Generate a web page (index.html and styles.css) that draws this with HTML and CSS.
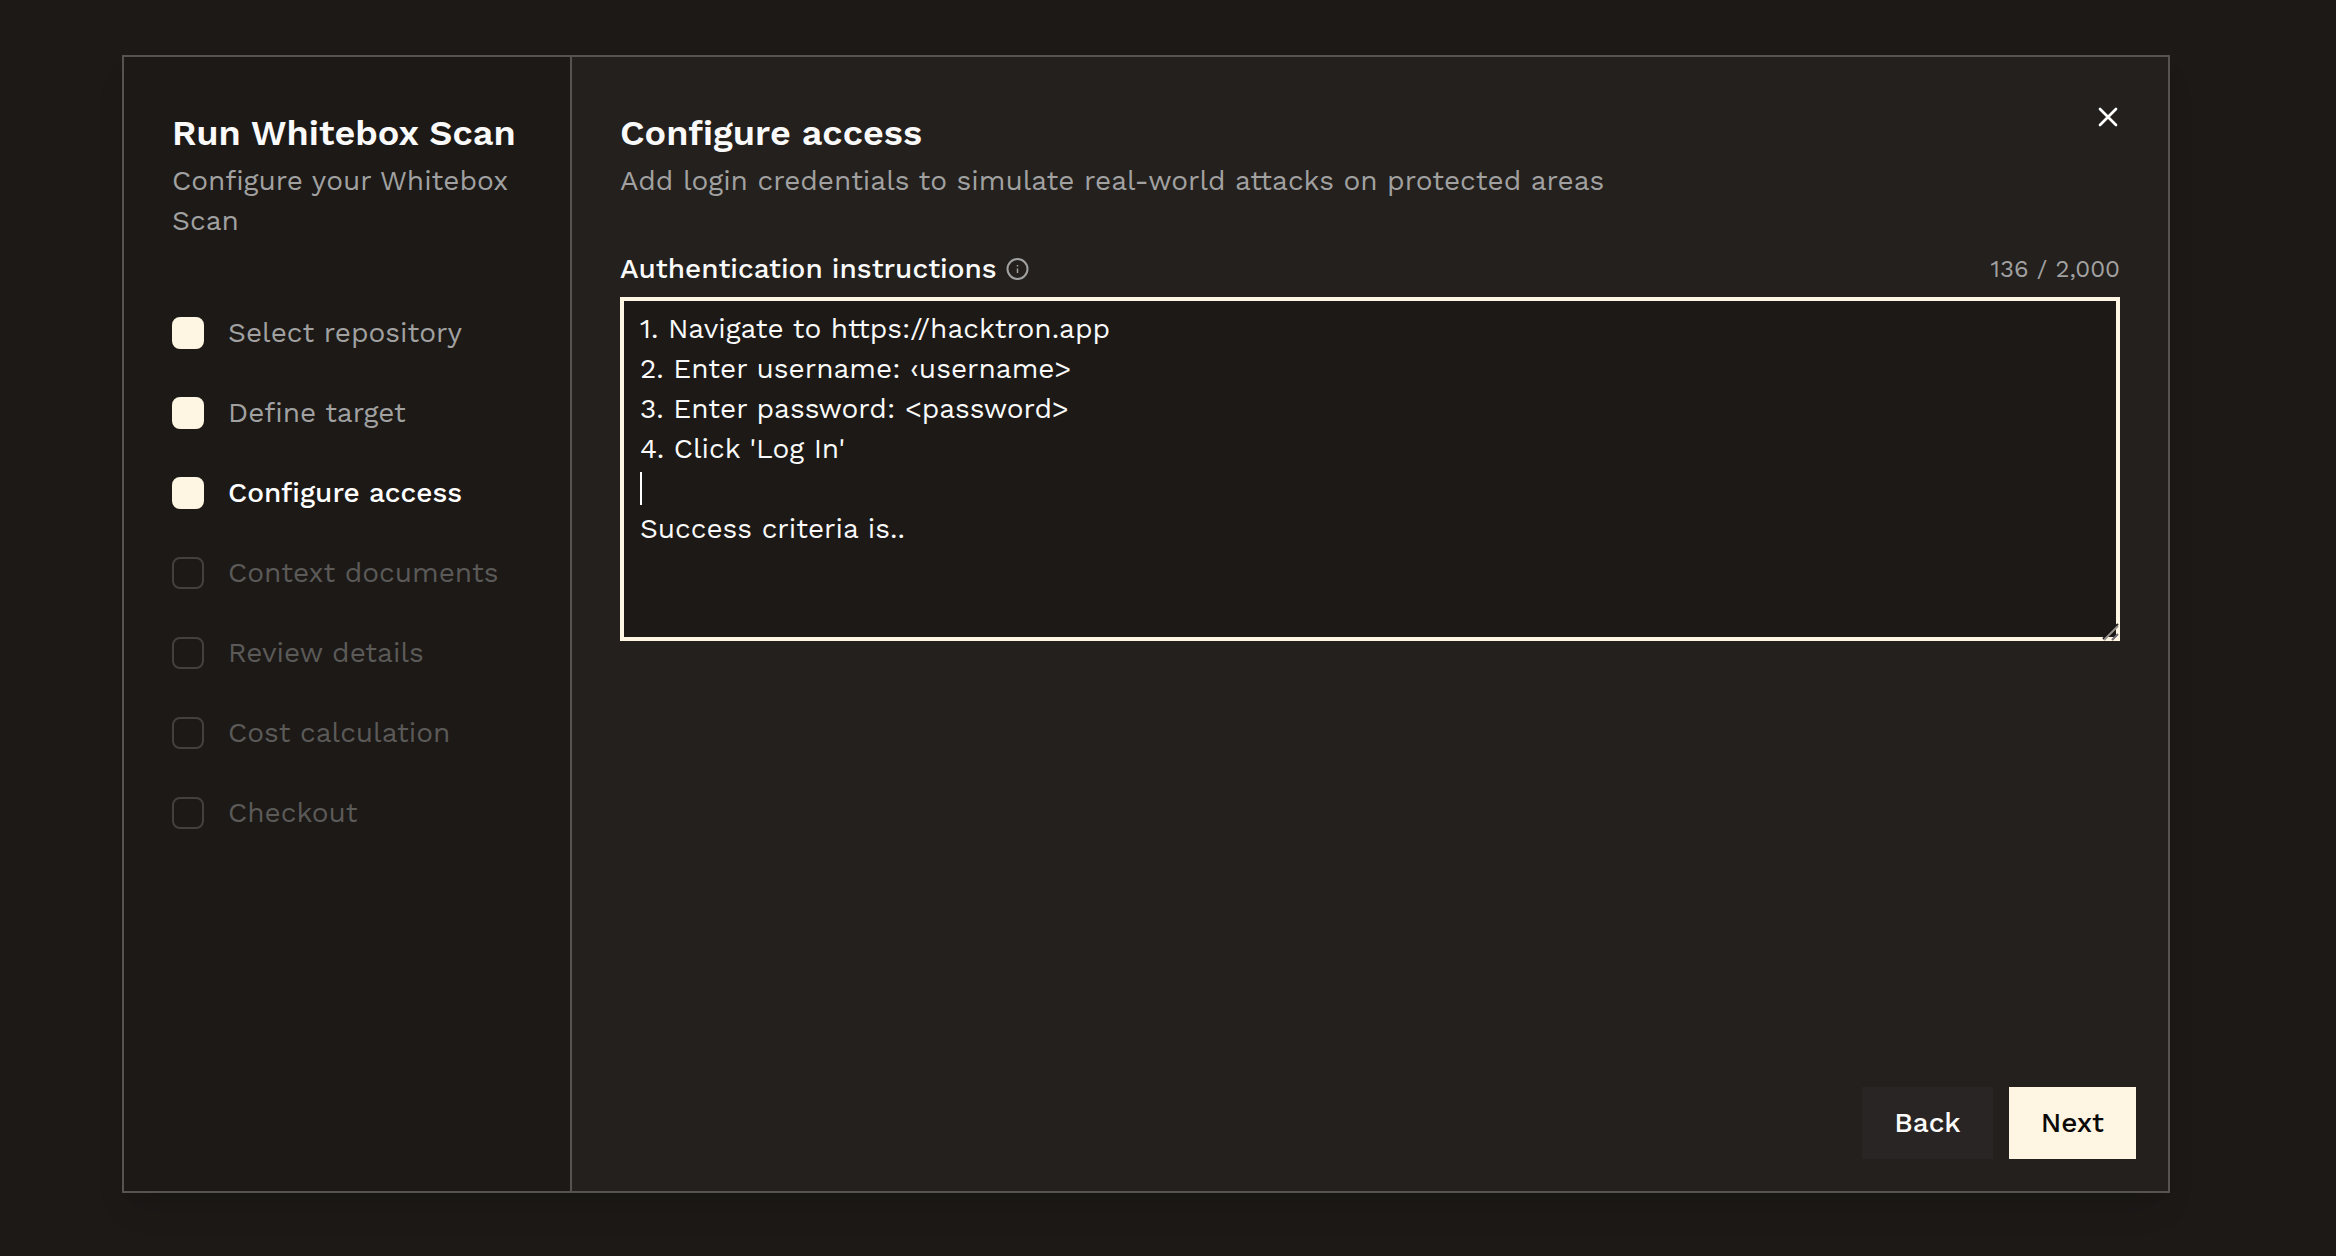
FILE: index.html
```html
<!DOCTYPE html>
<html lang="en">
<head>
  <meta charset="UTF-8">
  <meta name="viewport" content="width=device-width, initial-scale=1.0">
  <title>Run Whitebox Scan</title>
  <link rel="stylesheet" href="styles.css">
</head>
<body>

  <div class="modal" role="dialog" aria-labelledby="modal-title">
    <aside class="sidebar">
      <h1 class="title" id="modal-title">Run Whitebox Scan</h1>
      <p class="subtitle">Configure your Whitebox Scan</p>

      <ol class="steps">
        <li class="step"><input type="checkbox" id="step-repo" checked><label for="step-repo">Select repository</label></li>
        <li class="step"><input type="checkbox" id="step-target" checked><label for="step-target">Define target</label></li>
        <li class="step current"><input type="checkbox" id="step-access" checked><label for="step-access">Configure access</label></li>
        <li class="step pending"><input type="checkbox" id="step-docs" disabled><label for="step-docs">Context documents</label></li>
        <li class="step pending"><input type="checkbox" id="step-review" disabled><label for="step-review">Review details</label></li>
        <li class="step pending"><input type="checkbox" id="step-cost" disabled><label for="step-cost">Cost calculation</label></li>
        <li class="step pending"><input type="checkbox" id="step-checkout" disabled><label for="step-checkout">Checkout</label></li>
      </ol>
    </aside>

    <main class="content">
      <button class="close" type="button" aria-label="Close">
        <svg viewBox="0 0 24 24" fill="none" stroke="currentColor" stroke-width="2" stroke-linecap="round"><path d="M18 6 6 18M6 6l12 12"/></svg>
      </button>

      <h2 class="title">Configure access</h2>
      <p class="subtitle">Add login credentials to simulate real-world attacks on protected areas</p>

      <div class="field-head">
        <label for="instructions">Authentication instructions</label>
        <svg class="info" viewBox="0 0 24 24" fill="none" stroke="currentColor">
          <circle cx="12.5" cy="12" r="10" stroke-width="2"/>
          <path d="M12.5 11.5V16M12.5 8v1.5" stroke-width="1.5"/>
        </svg>
        <span class="counter">136 / 2,000</span>
      </div>

      <div class="editor">
        <textarea id="instructions" maxlength="2000" spellcheck="false">1. Navigate to https://hacktron.app
2. Enter username: ‹username&gt;
3. Enter password: &lt;password&gt;
4. Click 'Log In'

Success criteria is..</textarea>
        <span class="caret"></span>
        <svg class="grip" viewBox="0 0 18 18" fill="none">
          <path d="M1 16 16 1" stroke="#1c1917" stroke-width="2"/>
          <path d="M2 17 16 3" stroke="#96938c" stroke-width="2"/>
          <path d="M8 14l6-6v3l-3 3z" fill="#1c1917"/>
          <path d="M10 17l6-6" stroke="#6d6a72" stroke-width="2"/>
        </svg>
      </div>

      <div class="actions">
        <button class="btn back" type="button">Back</button>
        <button class="btn next" type="button">Next</button>
      </div>
    </main>
  </div>

</body>
</html>
```
FILE: styles.css
```css
* {
  box-sizing: border-box;
}

body {
  display: flex;
  min-height: 100vh;
  margin: 0;
  padding: 55px 166px 63px 122px;
  background: #1c1917;
  color: #fafafa;
  font-family: 'Work Sans', Inter, sans-serif;
  font-size: 28px;
  line-height: 40px;
}

.modal {
  display: flex;
  flex: 1;
  border: 2px solid #57534e;
  background: #23201d;
  box-shadow: 0 20px 30px -6px rgba(0, 0, 0, 0.1), 0 8px 12px -8px rgba(0, 0, 0, 0.1);
}

.sidebar {
  flex: 0 0 448px;
  padding: 48px;
  border-right: 2px solid #57534e;
  background: #1c1917;
}

.content {
  position: relative;
  display: flex;
  flex: 1;
  flex-direction: column;
  padding: 48px;
  padding-bottom: 32px;
}

.title {
  margin: 0;
  font-size: 36px;
  font-weight: 600;
  line-height: 56px;
  white-space: nowrap;
}

.subtitle {
  margin: 0;
  color: #a1a1a1;
}

.steps {
  display: flex;
  flex-direction: column;
  gap: 40px;
  margin: 72px 0 0;
  padding: 0;
  list-style: none;
}

.step {
  display: flex;
  align-items: center;
  gap: 24px;
  color: #a1a1a1;
  white-space: nowrap;
}

.step input {
  flex: none;
  appearance: none;
  width: 32px;
  height: 32px;
  margin: 0;
  border: 2px solid #44403c;
  border-radius: 8px;
}

.step input:checked {
  border-color: #fef5e3;
  background: #fef5e3;
}

.current {
  color: #fff;
  font-weight: 500;
}

.pending {
  color: #5b5a58;
}

.close {
  position: absolute;
  top: 44px;
  right: 44px;
  width: 32px;
  height: 32px;
  padding: 0;
  border: none;
  background: none;
  color: #fff;
  cursor: pointer;
}

.close svg {
  display: block;
}

.field-head {
  display: flex;
  align-items: center;
  gap: 8px;
  margin: 48px 0 8px;
  font-weight: 500;
}

.info {
  width: 24px;
  height: 24px;
  color: #a1a1a1;
}

.counter {
  margin-left: auto;
  color: #a1a1a1;
  font-size: 24px;
  font-weight: 400;
}

.editor {
  position: relative;
}

textarea {
  display: block;
  width: 100%;
  height: 344px;
  padding: 8px 16px;
  border: 4px solid #fef5e3;
  border-radius: 0;
  outline: none;
  background: #1c1917;
  color: #fafafa;
  font: inherit;
  resize: none;
}

.caret {
  position: absolute;
  top: 175px;
  left: 20px;
  width: 2px;
  height: 33px;
  background: #fff;
}

.grip {
  position: absolute;
  right: 0;
  bottom: 0;
  width: 18px;
  height: 18px;
}

.actions {
  display: flex;
  justify-content: flex-end;
  gap: 16px;
  margin: auto -16px 0 0;
}

.btn {
  padding: 16px 32px;
  border: none;
  font: inherit;
  font-weight: 500;
  cursor: pointer;
}

.back {
  background: #292524;
  color: #fafafa;
}

.next {
  background: #fef5e3;
  color: #0c0a09;
}
```
